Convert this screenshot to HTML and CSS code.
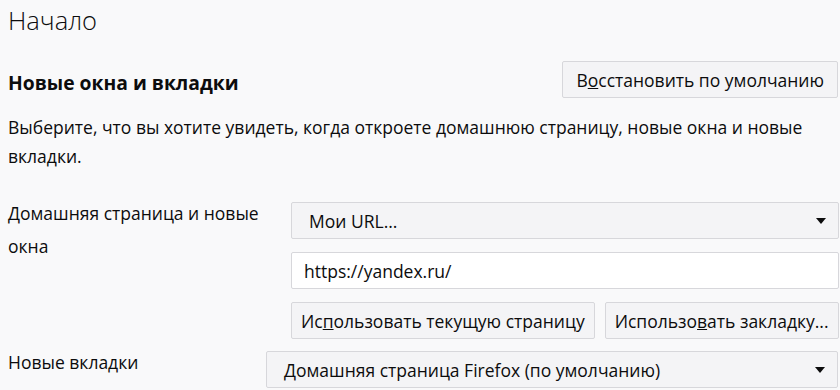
FILE: index.html
```html
<!DOCTYPE html>
<html lang="ru">
<head>
    <meta charset="UTF-8">
    <title>Настройки — Начало</title>
    <link rel="stylesheet" href="styles.css">
</head>
<body>
    <div class="page">
        <h1 class="page-title">Начало</h1>

        <!-- New windows and tabs -->
        <div class="section-head">
            <h2>Новые окна и вкладки</h2>
            <button class="btn">В<u>о</u>сстановить по умолчанию</button>
        </div>
        <p class="description">Выберите, что вы хотите увидеть, когда откроете домашнюю страницу, новые окна и новые вкладки.</p>

        <div class="row home-row">
            <label class="row-label home-label">Домашняя страница и новые окна</label>
            <div class="controls">
                <div class="select">
                    <span>Мои URL...</span>
                    <span class="arrow"></span>
                </div>
                <input class="url-input" type="text" value="https://yandex.ru/">
                <div class="btn-row">
                    <button class="btn">Ис<u>п</u>ользовать текущую страницу</button>
                    <button class="btn">Использо<u>в</u>ать закладку...</button>
                </div>
            </div>
        </div>

        <div class="row tabs-row">
            <label class="row-label tabs-label">Новые вкладки</label>
            <div class="select tabs-select">
                <span>Домашняя страница Firefox (по умолчанию)</span>
                <span class="arrow"></span>
            </div>
        </div>
    </div>
</body>
</html>
```

FILE: styles.css
```css
/* General */
body {
    margin: 0;
    background-color: #f9f9fa;
    color: #0c0c0d;
    font-family: "Open Sans", sans-serif;
    font-size: 17.5px;
}

.page {
    padding: 0 2px 0 8px;
}

.page-title {
    font-size: 25.5px;
    font-weight: 300;
    margin: 0;
    line-height: 40px;
}

/* Section header */
.section-head {
    display: flex;
    justify-content: space-between;
    align-items: center;
    margin-top: 21px;
}

.section-head h2 {
    font-size: 19.3px;
    font-weight: 700;
    margin: 0;
    padding-top: 5px;
}

.description {
    margin: 15px 0 0;
    line-height: 29px;
}

/* Buttons and fields */
.btn {
    font-family: inherit;
    font-size: 17.5px;
    color: #0c0c0d;
    background-color: #f4f4f6;
    border: 1px solid #d7d7db;
    border-radius: 2px;
    height: 37px;
    padding: 0 13px;
    margin: 0;
    white-space: nowrap;
}

.select {
    display: flex;
    justify-content: space-between;
    align-items: center;
    height: 37px;
    box-sizing: border-box;
    background-color: #f4f4f6;
    border: 1px solid #d7d7db;
    border-radius: 2px;
    padding: 0 12px 0 17px;
}

.arrow {
    width: 0;
    height: 0;
    border-left: 5px solid transparent;
    border-right: 5px solid transparent;
    border-top: 6px solid #0c0c0d;
}

.url-input {
    font-family: inherit;
    font-size: 17.5px;
    color: #0c0c0d;
    height: 37px;
    box-sizing: border-box;
    border: 1px solid #d7d7db;
    border-radius: 2px;
    background: #fff;
    padding: 0 12px;
    margin: 0;
}

/* Rows */
.row {
    display: flex;
    align-items: flex-start;
}

.row-label {
    line-height: 33px;
    margin-top: -5px;
}

.home-row {
    margin-top: 31px;
}

.home-label {
    width: 283px;
    padding-right: 10px;
    box-sizing: border-box;
    flex-shrink: 0;
}

.controls {
    flex: 1;
    display: flex;
    flex-direction: column;
    gap: 13px;
}

.btn-row {
    display: flex;
    gap: 10px;
}

.btn-row .btn {
    padding: 0 9px;
}

.btn-row .btn:last-child {
    flex: 1;
}

.tabs-row {
    margin-top: 12px;
}

.tabs-label {
    width: 258px;
    flex-shrink: 0;
}

.tabs-select {
    flex: 1;
}
```
